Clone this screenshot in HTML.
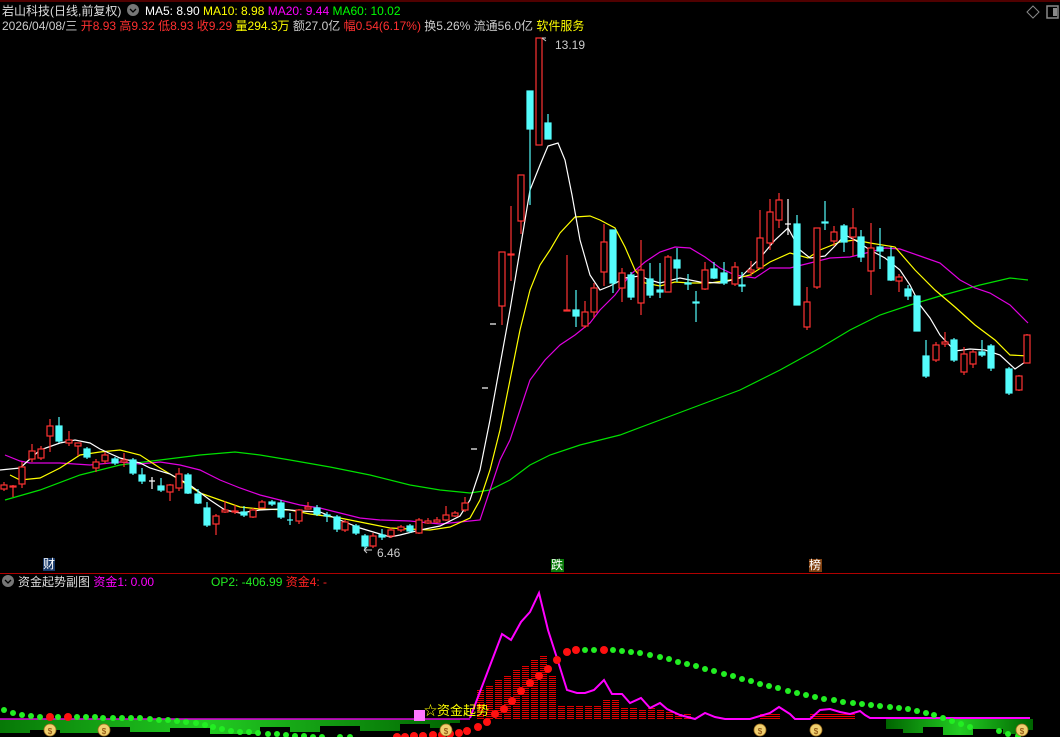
<!DOCTYPE html>
<html><head><meta charset="utf-8"><style>
html,body{margin:0;padding:0;background:#000;width:1060px;height:737px;overflow:hidden;font-family:"Liberation Sans","Noto Sans CJK SC",sans-serif}
.t{position:absolute;font-size:12px;white-space:nowrap;line-height:14px}
</style></head><body>
<svg width="1060" height="737" style="position:absolute;left:0;top:0" xmlns="http://www.w3.org/2000/svg">
<defs>
<pattern id="rs" width="4" height="2" patternUnits="userSpaceOnUse"><rect width="4" height="1" fill="#e00000"/></pattern>
<linearGradient id="gg" x1="0" x2="1"><stop offset="0" stop-color="#006400"/><stop offset=".5" stop-color="#22cc22"/><stop offset="1" stop-color="#006400"/></linearGradient>
</defs>
<line x1="0" y1="1" x2="1060" y2="1" stroke="#a00000"/>
<line x1="0" y1="573.5" x2="1060" y2="573.5" stroke="#b00000"/>
<g fill="none" stroke-width="1.2">
<polyline stroke="#00e000" points="5,500 40,490 80,475 120,465 160,460 200,455 235,452 260,455 290,460 330,467 370,475 410,485 440,490 470,493 490,490 510,480 530,465 550,455 580,445 620,435 660,420 700,405 740,390 780,370 820,348 850,330 880,315 910,305 940,296 980,285 1010,278 1028,280"/>
<polyline stroke="#e000e0" points="5,455 20,461 30,463 60,463 90,465 120,462 140,464 160,462 180,465 200,470 220,480 240,488 260,495 280,500 300,505 320,508 340,513 360,518 380,520 410,521 440,524 460,522 480,520 490,490 500,460 510,440 520,410 530,380 545,360 560,345 575,335 590,323 600,310 615,295 630,275 645,262 660,252 675,247 690,248 705,257 720,268 735,275 755,278 770,268 790,268 810,263 830,258 850,257 870,252 885,248 900,249 920,256 940,263 960,280 975,288 990,293 1010,305 1028,323"/>
<polyline stroke="#ffff00" points="10,475 20,480 40,478 60,468 80,455 100,452 120,450 140,455 160,468 180,480 200,493 220,500 240,507 260,509 290,510 310,514 340,518 370,524 390,528 410,529 430,530 450,527 470,518 480,500 490,470 500,430 510,380 520,330 530,290 540,265 550,250 560,233 575,217 590,216 600,220 615,228 625,247 635,270 645,283 660,286 675,282 690,283 710,283 730,280 750,275 770,262 790,253 808,258 820,250 840,242 855,240 870,243 895,247 915,270 935,290 955,307 975,325 995,340 1010,355 1028,356"/>
<polyline stroke="#ffffff" points="0,470 20,468 40,450 60,443 75,440 90,443 100,449 120,458 140,463 150,468 170,474 190,485 210,500 225,510 240,513 260,510 280,509 300,511 320,512 340,520 360,528 380,534 390,537 400,535 420,530 440,526 460,516 470,500 480,470 490,420 500,365 510,310 520,250 530,190 540,165 548,146 558,143 565,160 572,195 580,240 590,275 600,290 610,286 625,278 640,276 650,280 660,283 680,278 700,282 720,283 740,278 760,258 775,240 788,228 800,250 810,258 825,256 835,246 845,235 855,240 870,250 885,258 900,270 910,285 920,305 930,318 940,335 955,351 970,349 985,350 1000,355 1015,369 1028,360"/>
</g>
<g stroke-width="1.2">
<g stroke="#ff3232" fill="#000">
<line x1="4" y1="482" x2="4" y2="491"/><rect x="1" y="485" width="6" height="4"/>
<line x1="13" y1="485" x2="13" y2="497"/><rect x="10" y="486" width="6" height="1"/>
<line x1="22" y1="462" x2="22" y2="488"/><rect x="19" y="467" width="6" height="17"/>
<line x1="32" y1="444" x2="32" y2="462"/><rect x="29" y="451" width="6" height="8"/>
<line x1="41" y1="446" x2="41" y2="460"/><rect x="38" y="449" width="6" height="9"/>
<line x1="50" y1="419" x2="50" y2="452"/><rect x="47" y="426" width="6" height="10"/>
<line x1="69" y1="431" x2="69" y2="446"/><rect x="66" y="440" width="6" height="3"/>
<line x1="78" y1="443" x2="78" y2="456"/><rect x="75" y="443" width="6" height="3"/>
<line x1="96" y1="459" x2="96" y2="472"/><rect x="93" y="462" width="6" height="6"/>
<line x1="105" y1="452" x2="105" y2="464"/><rect x="102" y="455" width="6" height="6"/>
<line x1="124" y1="453" x2="124" y2="467"/><rect x="121" y="460" width="6" height="2"/>
<line x1="170" y1="484" x2="170" y2="501"/><rect x="167" y="485" width="6" height="7"/>
<line x1="179" y1="468" x2="179" y2="491"/><rect x="176" y="474" width="6" height="14"/>
<line x1="216" y1="514" x2="216" y2="535"/><rect x="213" y="516" width="6" height="8"/>
<line x1="225" y1="501" x2="225" y2="513"/><rect x="222" y="510" width="6" height="2"/>
<line x1="235" y1="505" x2="235" y2="514"/><rect x="232" y="511" width="6" height="1"/>
<line x1="253" y1="508" x2="253" y2="518"/><rect x="250" y="510" width="6" height="7"/>
<line x1="262" y1="500" x2="262" y2="508"/><rect x="259" y="502" width="6" height="6"/>
<line x1="299" y1="509" x2="299" y2="524"/><rect x="296" y="510" width="6" height="11"/>
<line x1="308" y1="502" x2="308" y2="509"/><rect x="305" y="507" width="6" height="2"/>
<line x1="345" y1="520" x2="345" y2="532"/><rect x="342" y="522" width="6" height="8"/>
<line x1="373" y1="533" x2="373" y2="548"/><rect x="370" y="536" width="6" height="10"/>
<line x1="391" y1="528" x2="391" y2="538"/><rect x="388" y="530" width="6" height="6"/>
<line x1="401" y1="525" x2="401" y2="532"/><rect x="398" y="527" width="6" height="3"/>
<line x1="419" y1="518" x2="419" y2="534"/><rect x="416" y="520" width="6" height="13"/>
<line x1="428" y1="518" x2="428" y2="524"/><rect x="425" y="521" width="6" height="2"/>
<line x1="437" y1="517" x2="437" y2="523"/><rect x="434" y="520" width="6" height="2"/>
<line x1="446" y1="506" x2="446" y2="521"/><rect x="443" y="515" width="6" height="5"/>
<line x1="455" y1="511" x2="455" y2="517"/><rect x="452" y="513" width="6" height="3"/>
<line x1="465" y1="497" x2="465" y2="512"/><rect x="462" y="503" width="6" height="7"/>
<line x1="502" y1="252" x2="502" y2="325"/><rect x="499" y="252" width="6" height="54"/>
<line x1="511" y1="206" x2="511" y2="281"/><rect x="508" y="254" width="6" height="1"/>
<line x1="521" y1="175" x2="521" y2="234"/><rect x="518" y="175" width="6" height="46"/>
<line x1="539" y1="38" x2="539" y2="145"/><rect x="536" y="38" width="6" height="107"/>
<line x1="567" y1="255" x2="567" y2="311"/><rect x="564" y="310" width="6" height="1"/>
<line x1="585" y1="301" x2="585" y2="328"/><rect x="582" y="312" width="6" height="14"/>
<line x1="594" y1="283" x2="594" y2="318"/><rect x="591" y="288" width="6" height="24"/>
<line x1="604" y1="224" x2="604" y2="286"/><rect x="601" y="242" width="6" height="30"/>
<line x1="622" y1="268" x2="622" y2="302"/><rect x="619" y="273" width="6" height="15"/>
<line x1="641" y1="240" x2="641" y2="315"/><rect x="638" y="270" width="6" height="33"/>
<line x1="668" y1="255" x2="668" y2="292"/><rect x="665" y="257" width="6" height="35"/>
<line x1="705" y1="262" x2="705" y2="290"/><rect x="702" y="270" width="6" height="19"/>
<line x1="735" y1="262" x2="735" y2="286"/><rect x="732" y="267" width="6" height="17"/>
<line x1="751" y1="261" x2="751" y2="276"/><rect x="748" y="270" width="6" height="2"/>
<line x1="760" y1="210" x2="760" y2="268"/><rect x="757" y="238" width="6" height="30"/>
<line x1="770" y1="199" x2="770" y2="250"/><rect x="767" y="212" width="6" height="31"/>
<line x1="779" y1="193" x2="779" y2="228"/><rect x="776" y="200" width="6" height="20"/>
<line x1="807" y1="287" x2="807" y2="330"/><rect x="804" y="302" width="6" height="25"/>
<line x1="817" y1="228" x2="817" y2="289"/><rect x="814" y="228" width="6" height="59"/>
<line x1="834" y1="226" x2="834" y2="246"/><rect x="831" y="232" width="6" height="9"/>
<line x1="853" y1="208" x2="853" y2="256"/><rect x="850" y="228" width="6" height="9"/>
<line x1="871" y1="223" x2="871" y2="295"/><rect x="868" y="248" width="6" height="23"/>
<line x1="899" y1="274" x2="899" y2="292"/><rect x="896" y="277" width="6" height="4"/>
<line x1="936" y1="342" x2="936" y2="362"/><rect x="933" y="345" width="6" height="15"/>
<line x1="945" y1="332" x2="945" y2="347"/><rect x="942" y="342" width="6" height="2"/>
<line x1="964" y1="347" x2="964" y2="375"/><rect x="961" y="354" width="6" height="18"/>
<line x1="973" y1="350" x2="973" y2="368"/><rect x="970" y="352" width="6" height="12"/>
<line x1="1019" y1="375" x2="1019" y2="391"/><rect x="1016" y="376" width="6" height="14"/>
<line x1="1027" y1="334" x2="1027" y2="363"/><rect x="1024" y="335" width="6" height="28"/>
</g>
<g stroke="#54fcfc" fill="#54fcfc">
<line x1="59" y1="417" x2="59" y2="443"/><rect x="56" y="426" width="6" height="15"/>
<line x1="87" y1="447" x2="87" y2="459"/><rect x="84" y="449" width="6" height="8"/>
<line x1="115" y1="457" x2="115" y2="465"/><rect x="112" y="459" width="6" height="4"/>
<line x1="133" y1="458" x2="133" y2="475"/><rect x="130" y="460" width="6" height="13"/>
<line x1="142" y1="468" x2="142" y2="484"/><rect x="139" y="475" width="6" height="6"/>
<line x1="161" y1="478" x2="161" y2="492"/><rect x="158" y="486" width="6" height="4"/>
<line x1="188" y1="473" x2="188" y2="494"/><rect x="185" y="475" width="6" height="18"/>
<line x1="198" y1="489" x2="198" y2="504"/><rect x="195" y="494" width="6" height="9"/>
<line x1="207" y1="502" x2="207" y2="527"/><rect x="204" y="508" width="6" height="17"/>
<line x1="244" y1="506" x2="244" y2="517"/><rect x="241" y="512" width="6" height="3"/>
<line x1="272" y1="500" x2="272" y2="506"/><rect x="269" y="502" width="6" height="2"/>
<line x1="281" y1="500" x2="281" y2="519"/><rect x="278" y="503" width="6" height="14"/>
<line x1="290" y1="513" x2="290" y2="525"/><line x1="287" y1="520" x2="293" y2="520"/>
<line x1="317" y1="505" x2="317" y2="516"/><rect x="314" y="508" width="6" height="6"/>
<line x1="327" y1="512" x2="327" y2="522"/><rect x="324" y="515" width="6" height="1"/>
<line x1="337" y1="515" x2="337" y2="532"/><rect x="334" y="517" width="6" height="12"/>
<line x1="356" y1="524" x2="356" y2="535"/><rect x="353" y="526" width="6" height="7"/>
<line x1="365" y1="534" x2="365" y2="549"/><rect x="362" y="536" width="6" height="10"/>
<line x1="382" y1="529" x2="382" y2="540"/><rect x="379" y="535" width="6" height="2"/>
<line x1="410" y1="524" x2="410" y2="533"/><rect x="407" y="526" width="6" height="5"/>
<line x1="530" y1="91" x2="530" y2="205"/><rect x="527" y="91" width="6" height="38"/>
<line x1="548" y1="114" x2="548" y2="139"/><rect x="545" y="123" width="6" height="16"/>
<line x1="576" y1="290" x2="576" y2="327"/><rect x="573" y="310" width="6" height="6"/>
<line x1="613" y1="230" x2="613" y2="293"/><rect x="610" y="230" width="6" height="53"/>
<line x1="631" y1="272" x2="631" y2="300"/><rect x="628" y="275" width="6" height="22"/>
<line x1="650" y1="263" x2="650" y2="298"/><rect x="647" y="279" width="6" height="16"/>
<line x1="660" y1="263" x2="660" y2="298"/><rect x="657" y="290" width="6" height="2"/>
<line x1="677" y1="248" x2="677" y2="282"/><rect x="674" y="260" width="6" height="8"/>
<line x1="688" y1="274" x2="688" y2="290"/><rect x="685" y="283" width="6" height="1"/>
<line x1="696" y1="291" x2="696" y2="322"/><rect x="693" y="302" width="6" height="1"/>
<line x1="714" y1="262" x2="714" y2="279"/><rect x="711" y="269" width="6" height="9"/>
<line x1="724" y1="262" x2="724" y2="285"/><rect x="721" y="273" width="6" height="10"/>
<line x1="742" y1="272" x2="742" y2="292"/><rect x="739" y="285" width="6" height="1"/>
<line x1="797" y1="215" x2="797" y2="305"/><rect x="794" y="224" width="6" height="81"/>
<line x1="825" y1="201" x2="825" y2="230"/><rect x="822" y="222" width="6" height="1"/>
<line x1="844" y1="224" x2="844" y2="252"/><rect x="841" y="226" width="6" height="16"/>
<line x1="861" y1="230" x2="861" y2="262"/><rect x="858" y="237" width="6" height="20"/>
<line x1="880" y1="228" x2="880" y2="269"/><rect x="877" y="247" width="6" height="4"/>
<line x1="891" y1="247" x2="891" y2="281"/><rect x="888" y="257" width="6" height="23"/>
<line x1="908" y1="285" x2="908" y2="300"/><rect x="905" y="289" width="6" height="7"/>
<line x1="917" y1="296" x2="917" y2="331"/><rect x="914" y="296" width="6" height="35"/>
<line x1="926" y1="340" x2="926" y2="378"/><rect x="923" y="356" width="6" height="20"/>
<line x1="954" y1="338" x2="954" y2="362"/><rect x="951" y="340" width="6" height="20"/>
<line x1="982" y1="340" x2="982" y2="357"/><rect x="979" y="352" width="6" height="3"/>
<line x1="991" y1="344" x2="991" y2="371"/><rect x="988" y="346" width="6" height="22"/>
<line x1="1009" y1="367" x2="1009" y2="395"/><rect x="1006" y="369" width="6" height="24"/>
</g>
<g stroke="#fff">
<line x1="152" y1="477" x2="152" y2="489"/><line x1="149" y1="481" x2="155" y2="481"/>
<line x1="788" y1="199" x2="788" y2="235"/><line x1="785" y1="224" x2="791" y2="224"/>
<line x1="471" y1="449" x2="477" y2="449"/><line x1="482" y1="388" x2="488" y2="388"/><line x1="490" y1="324" x2="496" y2="324"/>
</g>
</g>
<g fill="none" stroke="#ccc"><path d="M546,41 l-4,-3 M542,38 l4,0"/><path d="M364,550 l8,0 M364,550 l3,-3 M364,550 l3,3"/></g>
<path fill="url(#gg)" d="M0,719h460v4h-10v5h-20v-4h-30v7h-40v-5h-40v6h-30v-5h-30v7h-50v-6h-40v4h-40v-5h-30v6h-40v-3h-30v3h-30v-5h-30v8h-20z"/>
<path fill="url(#gg)" d="M886,719h147v11h-8v4h-22v-5h-30v6h-30v-8h-20v6h-20v-4h-17z"/>
<g fill="url(#rs)">
<rect x="477" y="690" width="7" height="29"/><rect x="486" y="686" width="7" height="33"/><rect x="495" y="680" width="7" height="39"/><rect x="504" y="676" width="7" height="43"/><rect x="513" y="670" width="7" height="49"/><rect x="522" y="666" width="7" height="53"/><rect x="531" y="660" width="7" height="59"/><rect x="540" y="656" width="7" height="63"/><rect x="549" y="676" width="7" height="43"/><rect x="558" y="705" width="7" height="14"/><rect x="567" y="706" width="7" height="13"/><rect x="576" y="706" width="7" height="13"/><rect x="585" y="706" width="7" height="13"/><rect x="594" y="705" width="7" height="14"/><rect x="603" y="700" width="7" height="19"/><rect x="612" y="700" width="7" height="19"/><rect x="621" y="707" width="7" height="12"/><rect x="630" y="707" width="7" height="12"/><rect x="639" y="710" width="7" height="9"/><rect x="648" y="708" width="7" height="11"/><rect x="657" y="710" width="7" height="9"/><rect x="666" y="712" width="7" height="7"/><rect x="675" y="713" width="7" height="6"/><rect x="684" y="714" width="7" height="5"/><rect x="760" y="713" width="20" height="6"/><rect x="810" y="713" width="45" height="6"/>
</g>
<line x1="0" y1="719" x2="470" y2="719" stroke="#e000e0" stroke-width="1.5"/>
<polyline fill="none" stroke="#ff00ff" stroke-width="2" points="470,718 502,634 511,640 521,622 530,612 539,593 548,630 556,655 567,690 577,693 585,693 594,690 604,680 612,694 622,694 630,703 641,698 650,708 660,703 667,709 680,715 695,719 705,713 715,717 725,719 750,719 770,713 779,707 790,714 795,719 810,719 820,710 830,709 840,712 850,714 860,711 865,715 870,718 1030,718"/>
<g fill="#ff1010">
<circle cx="50" cy="717" r="4"/><circle cx="68" cy="717" r="4"/>
<circle cx="397" cy="737" r="4"/><circle cx="405" cy="737" r="4"/><circle cx="414" cy="736" r="4"/><circle cx="423" cy="736" r="4"/><circle cx="433" cy="735" r="4"/><circle cx="442" cy="735" r="4"/><circle cx="450" cy="734" r="4"/><circle cx="459" cy="733" r="4"/><circle cx="467" cy="731" r="4"/><circle cx="478" cy="727" r="4"/><circle cx="487" cy="722" r="4"/><circle cx="495" cy="714" r="4"/><circle cx="504" cy="709" r="4"/><circle cx="512" cy="701" r="4"/><circle cx="521" cy="691" r="4"/><circle cx="530" cy="683" r="4"/><circle cx="539" cy="676" r="4"/><circle cx="548" cy="669" r="4"/><circle cx="557" cy="660" r="4"/><circle cx="567" cy="652" r="4"/><circle cx="576" cy="650" r="4"/><circle cx="604" cy="650" r="4"/>
</g>
<g fill="#22ee22">
<circle cx="4" cy="710" r="3"/><circle cx="13" cy="713" r="3"/><circle cx="22" cy="715" r="3"/><circle cx="31" cy="716" r="3"/><circle cx="40" cy="717" r="3"/><circle cx="58" cy="717" r="3"/><circle cx="77" cy="717" r="3"/><circle cx="86" cy="717" r="3"/><circle cx="95" cy="717" r="3"/><circle cx="103" cy="718" r="3"/><circle cx="113" cy="718" r="3"/><circle cx="122" cy="718" r="3"/><circle cx="131" cy="718" r="3"/><circle cx="140" cy="718" r="3"/><circle cx="150" cy="719" r="3"/><circle cx="159" cy="720" r="3"/><circle cx="168" cy="720" r="3"/><circle cx="177" cy="721" r="3"/><circle cx="186" cy="722" r="3"/><circle cx="196" cy="723" r="3"/><circle cx="205" cy="725" r="3"/><circle cx="213" cy="727" r="3"/><circle cx="222" cy="729" r="3"/><circle cx="231" cy="731" r="3"/><circle cx="240" cy="732" r="3"/><circle cx="249" cy="732" r="3"/><circle cx="258" cy="733" r="3"/><circle cx="268" cy="734" r="3"/><circle cx="277" cy="734" r="3"/><circle cx="286" cy="735" r="3"/><circle cx="295" cy="736" r="3"/><circle cx="304" cy="736" r="3"/><circle cx="313" cy="737" r="3"/><circle cx="322" cy="737" r="3"/><circle cx="340" cy="737" r="3"/><circle cx="350" cy="737" r="3"/>
<circle cx="585" cy="650" r="3"/><circle cx="594" cy="650" r="3"/><circle cx="613" cy="650" r="3"/><circle cx="622" cy="651" r="3"/><circle cx="631" cy="652" r="3"/><circle cx="640" cy="653" r="3"/><circle cx="650" cy="655" r="3"/><circle cx="660" cy="657" r="3"/><circle cx="669" cy="659" r="3"/><circle cx="678" cy="662" r="3"/><circle cx="687" cy="664" r="3"/><circle cx="696" cy="666" r="3"/><circle cx="705" cy="669" r="3"/><circle cx="714" cy="671" r="3"/><circle cx="724" cy="674" r="3"/><circle cx="733" cy="676" r="3"/><circle cx="742" cy="679" r="3"/><circle cx="751" cy="681" r="3"/><circle cx="760" cy="684" r="3"/><circle cx="769" cy="686" r="3"/><circle cx="778" cy="688" r="3"/><circle cx="788" cy="691" r="3"/><circle cx="797" cy="693" r="3"/><circle cx="806" cy="695" r="3"/><circle cx="815" cy="697" r="3"/><circle cx="824" cy="699" r="3"/><circle cx="834" cy="700" r="3"/><circle cx="843" cy="702" r="3"/><circle cx="853" cy="703" r="3"/><circle cx="862" cy="704" r="3"/><circle cx="871" cy="705" r="3"/><circle cx="880" cy="706" r="3"/><circle cx="890" cy="707" r="3"/><circle cx="899" cy="708" r="3"/><circle cx="908" cy="709" r="3"/><circle cx="917" cy="711" r="3"/><circle cx="926" cy="713" r="3"/><circle cx="934" cy="715" r="3"/><circle cx="943" cy="718" r="3"/><circle cx="952" cy="721" r="3"/><circle cx="961" cy="724" r="3"/><circle cx="970" cy="727" r="3"/><circle cx="999" cy="731" r="3"/><circle cx="1008" cy="734" r="3"/><circle cx="1018" cy="736" r="3"/>
</g>
<rect x="414" y="710" width="11" height="11" fill="#ff77ff"/>
<g fill="#f0d070" stroke="#a07020" stroke-width="0.8">
<ellipse cx="50" cy="730" rx="6" ry="6"/><ellipse cx="104" cy="730" rx="6" ry="6"/><ellipse cx="446" cy="730" rx="6" ry="6"/><ellipse cx="760" cy="730" rx="6" ry="6"/><ellipse cx="816" cy="730" rx="6" ry="6"/><ellipse cx="1022" cy="730" rx="6" ry="6"/>
</g>
<g fill="#804000" font-size="8" font-family="Liberation Sans" text-anchor="middle">
<text x="50" y="734">$</text><text x="104" y="734">$</text><text x="446" y="734">$</text><text x="760" y="734">$</text><text x="816" y="734">$</text><text x="1022" y="734">$</text>
</g>
<circle cx="8" cy="581" r="6" fill="#777"/><path d="M5,580 l3,3 l3,-3" stroke="#000" fill="none" stroke-width="1.3"/>
<circle cx="133" cy="10" r="6" fill="#777"/><path d="M130,9 l3,3 l3,-3" stroke="#000" fill="none" stroke-width="1.3"/>
<path d="M1033,6 l6,6 l-6,6 l-6,-6z" fill="none" stroke="#888"/>
<rect x="1047" y="6" width="11" height="12" fill="none" stroke="#888" stroke-width="1.5"/><rect x="1053" y="8" width="4" height="8" fill="#888"/>
<rect x="43" y="558" width="12" height="13" fill="#1a3a6a"/>
<rect x="551" y="559" width="13" height="13" fill="#0a7a0a"/>
<rect x="809" y="559" width="13" height="13" fill="#804010"/>
</svg>
<div class="t" style="left:2px;top:4px;color:#ddd">岩山科技(日线,前复权)</div>
<div class="t" style="left:145px;top:4px;color:#fff">MA5: 8.90 <span style="color:#ff0">MA10: 8.98</span> <span style="color:#f0f">MA20: 9.44</span> <span style="color:#0f0">MA60: 10.02</span></div>
<div class="t" style="left:2px;top:19px;color:#ccc">2026/04/08/三 <span style="color:#ff3030">开8.93 高9.32 低8.93 收9.29</span> <span style="color:#ff0">量294.3万</span> 额27.0亿 <span style="color:#ff3030">幅0.54(6.17%)</span> 换5.26% 流通56.0亿 <span style="color:#ff0">软件服务</span></div>
<div class="t" style="left:555px;top:38px;color:#ccc">13.19</div>
<div class="t" style="left:377px;top:546px;color:#ccc">6.46</div>
<div class="t" style="left:43px;top:557px;color:#fff">财</div>
<div class="t" style="left:551px;top:558px;color:#fff">跌</div>
<div class="t" style="left:809px;top:558px;color:#fff">榜</div>
<div class="t" style="left:18px;top:575px;color:#ddd">资金起势副图 <span style="color:#f0f">资金1: 0.00</span></div>
<div class="t" style="left:211px;top:575px;color:#2e2">OP2: -406.99 <span style="color:#f22">资金4: -</span></div>
<div class="t" style="left:424px;top:704px;color:#ff0;font-size:13px">☆资金起势</div>
</body></html>
